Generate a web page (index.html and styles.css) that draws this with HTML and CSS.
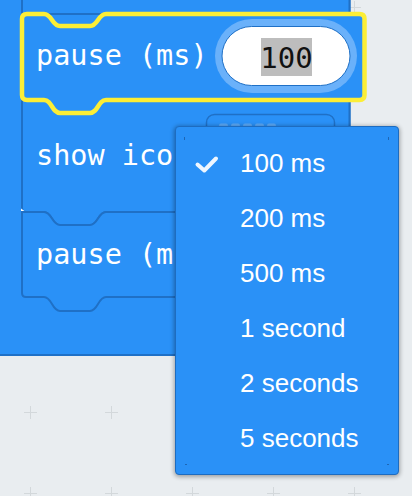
FILE: index.html
```html
<!DOCTYPE html>
<html lang="en">
<head>
<meta charset="utf-8">
<title>Blocks workspace</title>
<link rel="stylesheet" href="styles.css">
</head>
<body>
<div class="workspace">
  <svg class="canvas" width="412" height="496" viewBox="0 0 412 496" xmlns="http://www.w3.org/2000/svg">
    <defs>
      <pattern id="grid" x="-10" y="-33" width="81" height="81" patternUnits="userSpaceOnUse">
        <path class="grid-cross" d="M34 40.5H47M40.5 34V47"/>
      </pattern>
    </defs>
    <rect width="412" height="496" fill="url(#grid)"/>

    <!-- forever (C-block) -->
    <rect class="blk" x="-10" y="-10" width="359.5" height="365" rx="4"/>
    <!-- block above -->
    <path class="blk" d="M22 -20V14H349.5V-20Z"/>

    <!-- show icon block -->
    <path class="blk" d="M22 100V208Q22 212 26 212H44C52 212 52 225 60 225H90C98 225 98 212 106 212H349.5V100Z"/>
    <rect class="icon-field" x="206.5" y="114.5" width="128" height="84" rx="8"/>
    <g class="led">
      <rect x="219" y="123.5" width="9" height="6" rx="2"/>
      <rect x="231" y="123.5" width="9" height="6" rx="2"/>
      <rect x="243" y="123.5" width="9" height="6" rx="2"/>
      <rect x="255" y="123.5" width="9" height="6" rx="2"/>
      <rect x="267" y="123.5" width="9" height="6" rx="2"/>
    </g>
    <text class="blk-text" x="36" y="165">show icon</text>
    <path class="tick" d="M21 208.5l3.5 2.5-3.5 2.5Z"/>

    <!-- pause block 3 -->
    <path class="blk" d="M22 212H44C52 212 52 225 60 225H90C98 225 98 212 106 212H366V293Q366 297 362 297H106C98 297 98 311 90 311H60C52 311 52 297 44 297H26Q22 297 22 293Z"/>
    <text class="blk-text" x="36" y="264">pause (ms)</text>

    <!-- selected pause block -->
    <path class="blk-selected" d="M22 19Q22 14 27 14H44C52 14 52 26 60 26H90C98 26 98 14 106 14H359.5Q364.5 14 364.5 19V95Q364.5 100 359.5 100H106C98 100 98 113 90 113H60C52 113 52 100 44 100H27Q22 100 22 95Z"/>
    <text class="blk-text" x="36" y="65">pause (ms)</text>
    <rect class="field-ring" x="215" y="19" width="142" height="74" rx="37"/>
    <rect class="field" x="222" y="26.5" width="128" height="59" rx="29.5"/>
    <rect class="selection" x="261" y="38" width="51" height="38"/>
    <text class="field-text" x="286.5" y="68">100</text>
  </svg>

  <div class="dropdown" role="menu">
    <div class="item" role="menuitemcheckbox" aria-checked="true">
      <span class="check"><svg width="26" height="20" viewBox="0 0 26 20"><path d="M3.5 10.5L10.3 16.5L22 4.5"/></svg></span>
      <span class="label">100 ms</span>
    </div>
    <div class="item" role="menuitemcheckbox"><span class="check"></span><span class="label">200 ms</span></div>
    <div class="item" role="menuitemcheckbox"><span class="check"></span><span class="label">500 ms</span></div>
    <div class="item" role="menuitemcheckbox"><span class="check"></span><span class="label">1 second</span></div>
    <div class="item" role="menuitemcheckbox"><span class="check"></span><span class="label">2 seconds</span></div>
    <div class="item" role="menuitemcheckbox"><span class="check"></span><span class="label">5 seconds</span></div>
  </div>
</div>
</body>
</html>
```

FILE: styles.css
```css
html, body {
  margin: 0;
  padding: 0;
}

body {
  background: #e9edf0;
  font-family: "Liberation Sans", Arial, sans-serif;
}

.workspace {
  position: relative;
  width: 412px;
  height: 496px;
  overflow: hidden;
  background: #e9edf0;
}

.canvas {
  display: block;
}

.grid-cross {
  stroke: #d3d8db;
  stroke-width: 1;
  fill: none;
}

.blk {
  fill: #2a91f7;
  stroke: #1f70c6;
  stroke-width: 2;
}

.blk-selected {
  fill: #2a91f7;
  stroke: #fcee36;
  stroke-width: 4.5;
  stroke-linejoin: round;
}

.blk-text {
  fill: #ffffff;
  font-family: "DejaVu Sans Mono", "Liberation Mono", monospace;
  font-size: 28.5px;
}

.tick {
  fill: #ffffff;
}

.icon-field {
  fill: #2a91f7;
  stroke: #1f70c6;
  stroke-width: 1.5;
}

.led rect {
  fill: #5aa8f6;
}

.field-ring {
  fill: #6ab1fa;
}

.field {
  fill: #ffffff;
  stroke: #1f70c6;
  stroke-width: 1;
}

.selection {
  fill: #bdbdbd;
}

.field-text {
  fill: #111111;
  font-family: "DejaVu Sans Mono", "Liberation Mono", monospace;
  font-size: 29px;
  text-anchor: middle;
}

.dropdown {
  position: absolute;
  left: 175px;
  top: 126px;
  width: 224px;
  box-sizing: border-box;
  padding: 9px 0 8px;
  border: 1px solid #1d6cc0;
  border-radius: 4px;
  background:
    linear-gradient(#1d66b5, #1d66b5) 8px 10px / 1px 3px no-repeat,
    linear-gradient(#1d66b5, #1d66b5) 212px 10px / 1px 3px no-repeat,
    linear-gradient(#1d66b5, #1d66b5) 9px 337px / 2px 1px no-repeat,
    linear-gradient(#1d66b5, #1d66b5) 211px 337px / 2px 1px no-repeat,
    #2a91f7;
  box-shadow: 0 1px 4px 1px rgba(0, 0, 0, 0.32);
  display: flex;
  flex-direction: column;
}

.item {
  display: flex;
  align-items: center;
  height: 55px;
  padding-left: 18px;
  color: #ffffff;
  font-size: 26px;
  line-height: 55px;
  white-space: nowrap;
}

.check {
  display: flex;
  align-items: center;
  width: 26px;
  height: 20px;
  margin-right: 20px;
}

.check svg {
  display: block;
}

.check path {
  fill: none;
  stroke: #ffffff;
  stroke-width: 4;
  stroke-linecap: round;
  stroke-linejoin: round;
  opacity: 0.92;
}

.label {
  display: block;
}
```
